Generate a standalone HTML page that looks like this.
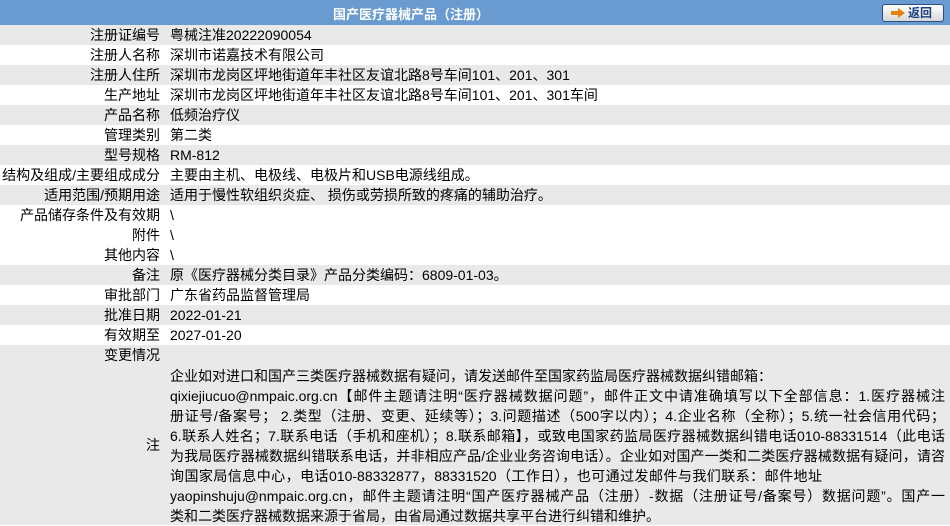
<!DOCTYPE html>
<html><head><meta charset="utf-8"><style>
body{margin:0;width:950px;height:525px;overflow:hidden;background:#fff;font-family:"Liberation Sans","Noto Sans CJK SC",sans-serif;font-size:14px;color:#000}
.hd{position:absolute;left:0;top:0;width:950px;height:25px;background:#6a9bd0}
.hd .t{position:absolute;left:333px;top:4px;color:#fff;font-weight:bold;font-size:13px}
.btn{position:absolute;left:882px;top:4px;width:60px;height:16px;border:1px solid #2a4f86;border-radius:3px;background:linear-gradient(#fff,#d8d8d8);}
.btn b{position:absolute;left:25px;top:0px;color:#1a3f80;font-size:12px;line-height:16px}
.r{position:absolute;left:0;width:950px;height:20px;line-height:20px}
.g{background:#e9e9e9}
.l{position:absolute;left:0;width:160px;text-align:right;white-space:nowrap}
.v{position:absolute;left:170px;white-space:nowrap}
.note{position:absolute;left:0;top:365px;width:950px;height:160px;background:#e9e9e9}
.note .l{top:70px;line-height:20px}
.note .v{top:1px;line-height:20px}
.note .v div{white-space:nowrap;width:775px;text-align:justify;text-align-last:justify;overflow:hidden;height:20px}
</style></head><body>
<div class="hd"><span class="t">国产医疗器械产品（注册）</span>
<div class="btn"><svg style="position:absolute;left:8px;top:3px" width="14" height="10"><path d="M0 3h7V0l7 5-7 5V7H0z" fill="#e8820c"/></svg><b>返回</b></div></div>
<div class="r g" style="top:25px"><span class="l">注册证编号</span><span class="v">粤械注准20222090054</span></div>
<div class="r" style="top:45px"><span class="l">注册人名称</span><span class="v">深圳市诺嘉技术有限公司</span></div>
<div class="r g" style="top:65px"><span class="l">注册人住所</span><span class="v">深圳市龙岗区坪地街道年丰社区友谊北路8号车间101、201、301</span></div>
<div class="r" style="top:85px"><span class="l">生产地址</span><span class="v">深圳市龙岗区坪地街道年丰社区友谊北路8号车间101、201、301车间</span></div>
<div class="r g" style="top:105px"><span class="l">产品名称</span><span class="v">低频治疗仪</span></div>
<div class="r" style="top:125px"><span class="l">管理类别</span><span class="v">第二类</span></div>
<div class="r g" style="top:145px"><span class="l">型号规格</span><span class="v">RM-812</span></div>
<div class="r" style="top:165px"><span class="l">结构及组成/主要组成成分</span><span class="v">主要由主机、电极线、电极片和USB电源线组成。</span></div>
<div class="r g" style="top:185px"><span class="l">适用范围/预期用途</span><span class="v">适用于慢性软组织炎症、 损伤或劳损所致的疼痛的辅助治疗。</span></div>
<div class="r" style="top:205px"><span class="l">产品储存条件及有效期</span><span class="v">\</span></div>
<div class="r" style="top:225px"><span class="l">附件</span><span class="v">\</span></div>
<div class="r" style="top:245px"><span class="l">其他内容</span><span class="v">\</span></div>
<div class="r g" style="top:265px"><span class="l">备注</span><span class="v">原《医疗器械分类目录》产品分类编码：6809-01-03。</span></div>
<div class="r" style="top:285px"><span class="l">审批部门</span><span class="v">广东省药品监督管理局</span></div>
<div class="r g" style="top:305px"><span class="l">批准日期</span><span class="v">2022-01-21</span></div>
<div class="r" style="top:325px"><span class="l">有效期至</span><span class="v">2027-01-20</span></div>
<div class="r g" style="top:345px"><span class="l">变更情况</span></div>
<div class="note"><span class="l">注</span><div class="v">
<div style="width:600px">企业如对进口和国产三类医疗器械数据有疑问，请发送邮件至国家药监局医疗器械数据纠错邮箱：</div>
<div>qixiejiucuo@nmpaic.org.cn【邮件主题请注明“医疗器械数据问题”，邮件正文中请准确填写以下全部信息：1.医疗器械注</div>
<div>册证号/备案号； 2.类型（注册、变更、延续等）；3.问题描述（500字以内）；4.企业名称（全称）；5.统一社会信用代码；</div>
<div>6.联系人姓名；7.联系电话（手机和座机）；8.联系邮箱】，或致电国家药监局医疗器械数据纠错电话010-88331514（此电话</div>
<div>为我局医疗器械数据纠错联系电话，并非相应产品/企业业务咨询电话）。企业如对国产一类和二类医疗器械数据有疑问，请咨</div>
<div style="width:652px">询国家局信息中心，电话010-88332877，88331520（工作日），也可通过发邮件与我们联系：邮件地址</div>
<div>yaopinshuju@nmpaic.org.cn，邮件主题请注明“国产医疗器械产品（注册）-数据（注册证号/备案号）数据问题”。国产一</div>
<div style="width:483px">类和二类医疗器械数据来源于省局，由省局通过数据共享平台进行纠错和维护。</div>
</div></div>
</body></html>
